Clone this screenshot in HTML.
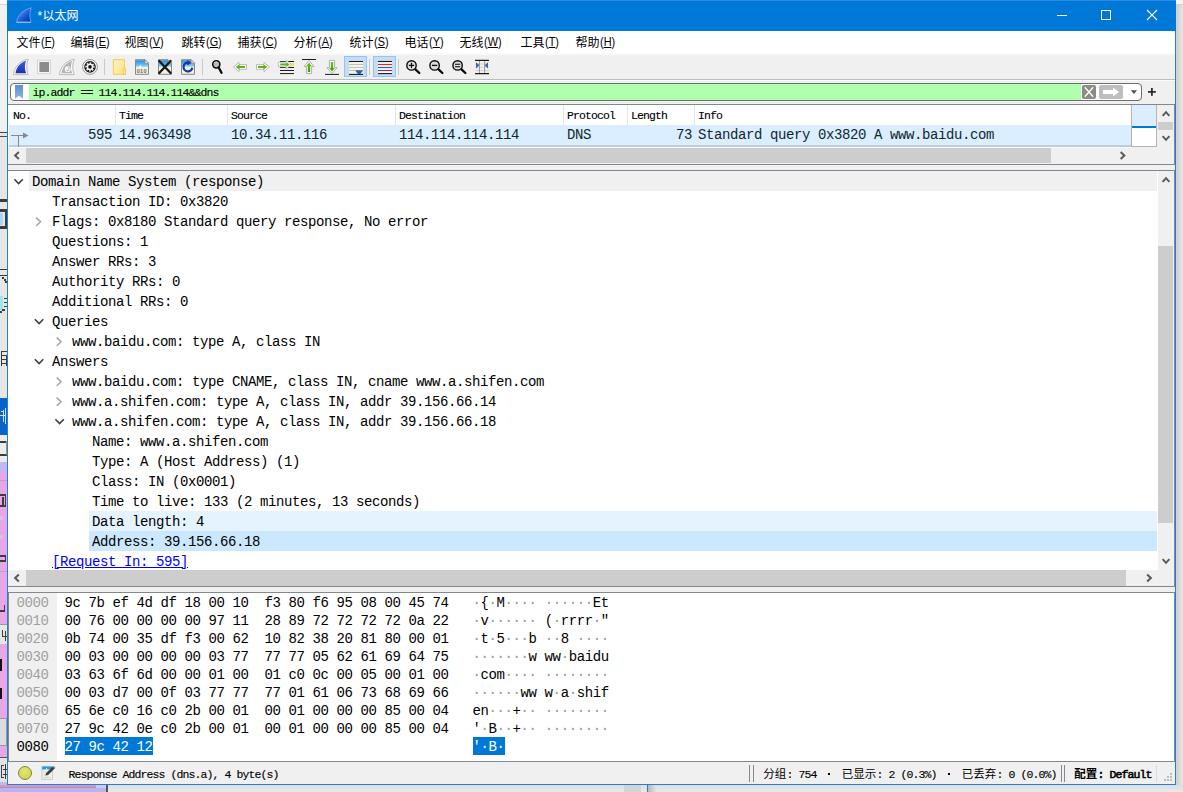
<!DOCTYPE html><html><head><meta charset="utf-8"><title>Wireshark</title><style>
*{margin:0;padding:0;box-sizing:border-box}
html,body{width:1183px;height:792px;overflow:hidden}
body{position:relative;background:#e9e9e9;font-family:"Liberation Sans",sans-serif;font-size:12px;color:#000}
.a{position:absolute}
.win{left:7px;top:0;width:1169px;height:785px;background:#f0f0f0;border:1px solid #1a82d8;border-top:none}
.mono{font-family:"Liberation Mono",monospace;font-size:14px;letter-spacing:-0.4px;white-space:pre;line-height:20px;height:20px}
.sim{font-family:"Liberation Mono",monospace;font-size:11.5px;letter-spacing:-0.9px;white-space:pre;-webkit-text-stroke:0.12px currentColor}
.ui{font-family:"Liberation Sans",sans-serif;font-size:12px;white-space:pre}
.ln{background:#828790}
svg{position:absolute;overflow:visible}
.cjk{font-family:"Liberation Sans","Noto Sans CJK SC",sans-serif}
</style></head><body><div class="a" style="left:0px;top:0px;width:7px;height:4px;background:#fafafa;"></div><div class="a" style="left:0px;top:4px;width:7px;height:1px;background:#d9d9d9;"></div><div class="a" style="left:0px;top:5px;width:7px;height:126px;background:#f1f1f1;"></div><div class="a" style="left:0px;top:131px;width:7px;height:267px;background:#e6e6e6;"></div><div class="a" style="left:0px;top:132px;width:7px;height:1px;background:#4a4a4a;"></div><div class="a" style="left:0px;top:136px;width:7px;height:1px;background:#4a4a4a;"></div><div class="a" style="left:0px;top:199px;width:7px;height:3px;background:#3c3c3c;"></div><div class="a" style="left:0px;top:209px;width:7px;height:3px;background:#3c3c3c;"></div><div class="a" style="left:5px;top:212px;width:2px;height:15px;background:#3c3c3c;"></div><div class="a" style="left:0px;top:213px;width:3px;height:12px;background:#a6d6f6;"></div><div class="a" style="left:0px;top:226px;width:7px;height:3px;background:#3c3c3c;"></div><div class="a" style="left:0px;top:269px;width:7px;height:1px;background:#3c3c3c;"></div><div class="a" style="left:0px;top:275px;width:7px;height:1px;background:#3c3c3c;"></div><div class="a" style="left:2px;top:277px;width:2px;height:2px;background:#3c3c3c;"></div><div class="a" style="left:4px;top:279px;width:2px;height:2px;background:#3c3c3c;"></div><div class="a" style="left:5px;top:281px;width:2px;height:2px;background:#3c3c3c;"></div><div class="a" style="left:0px;top:296px;width:3px;height:14px;background:#9fe3ee;"></div><div class="a" style="left:4px;top:298px;width:3px;height:1px;background:#3c3c3c;"></div><div class="a" style="left:4px;top:302px;width:3px;height:1px;background:#3c3c3c;"></div><div class="a" style="left:4px;top:306px;width:3px;height:1px;background:#3c3c3c;"></div><div class="a" style="left:2px;top:309px;width:3px;height:2px;background:#3c3c3c;"></div><div class="a" style="left:0px;top:311px;width:2px;height:2px;background:#3c3c3c;"></div><div class="a" style="left:1px;top:351px;width:6px;height:1px;background:#3c3c3c;"></div><div class="a" style="left:1px;top:355px;width:6px;height:1px;background:#3c3c3c;"></div><div class="a" style="left:1px;top:359px;width:6px;height:1px;background:#3c3c3c;"></div><div class="a" style="left:1px;top:363px;width:6px;height:1px;background:#3c3c3c;"></div><div class="a" style="left:1px;top:351px;width:1px;height:15px;background:#3c3c3c;"></div><div class="a" style="left:6px;top:355px;width:1px;height:11px;background:#3c3c3c;"></div><div class="a" style="left:0px;top:398px;width:7px;height:37px;background:#0a63c9;"></div><div class="a" style="left:1px;top:411px;width:2px;height:1px;background:#cfe3f8;"></div><div class="a" style="left:0px;top:415px;width:5px;height:1px;background:#cfe3f8;"></div><div class="a" style="left:3px;top:410px;width:1px;height:12px;background:#cfe3f8;"></div><div class="a" style="left:5px;top:408px;width:1px;height:16px;background:#cfe3f8;"></div><div class="a" style="left:0px;top:435px;width:7px;height:27px;background:#ececec;"></div><div class="a" style="left:0px;top:441px;width:6px;height:2px;background:#3c3c3c;"></div><div class="a" style="left:0px;top:454px;width:7px;height:2px;background:#3c3c3c;"></div><div class="a" style="left:6px;top:441px;width:1px;height:14px;background:#c98a3a;"></div><div class="a" style="left:0px;top:462px;width:7px;height:10px;background:#c4b6ee;"></div><div class="a" style="left:0px;top:472px;width:7px;height:320px;background:#e7a6e7;"></div><div class="a" style="left:0px;top:480px;width:7px;height:1px;background:#c5a0c5;"></div><div class="a" style="left:0px;top:571px;width:7px;height:1px;background:#c5a0c5;"></div><div class="a" style="left:0px;top:494px;width:6px;height:2px;background:#3c3c3c;"></div><div class="a" style="left:2px;top:497px;width:2px;height:9px;background:#3c3c3c;"></div><div class="a" style="left:0px;top:505px;width:6px;height:2px;background:#3c3c3c;"></div><div class="a" style="left:5px;top:494px;width:1px;height:12px;background:#3c3c3c;"></div><div class="a" style="left:0px;top:516px;width:3px;height:4px;background:#d9c3d9;"></div><div class="a" style="left:0px;top:535px;width:3px;height:4px;background:#d9c3d9;"></div><div class="a" style="left:0px;top:555px;width:6px;height:2px;background:#3c3c3c;"></div><div class="a" style="left:0px;top:560px;width:6px;height:2px;background:#3c3c3c;"></div><div class="a" style="left:5px;top:556px;width:1px;height:5px;background:#3c3c3c;"></div><div class="a" style="left:0px;top:610px;width:5px;height:2px;background:#3c3c3c;"></div><div class="a" style="left:4px;top:605px;width:1px;height:7px;background:#3c3c3c;"></div><div class="a" style="left:0px;top:624px;width:7px;height:20px;background:#e6e6e6;"></div><div class="a" style="left:0px;top:624px;width:7px;height:1px;background:#9a9a9a;"></div><div class="a" style="left:2px;top:630px;width:1px;height:7px;background:#3c3c3c;"></div><div class="a" style="left:2px;top:636px;width:5px;height:1px;background:#3c3c3c;"></div><div class="a" style="left:5px;top:631px;width:1px;height:10px;background:#3c3c3c;"></div><div class="a" style="left:0px;top:659px;width:2px;height:12px;background:#111;"></div><div class="a" style="left:0px;top:688px;width:2px;height:11px;background:#111;"></div><div class="a" style="left:0px;top:718px;width:7px;height:28px;background:#dcdcdc;"></div><div class="a" style="left:0px;top:718px;width:7px;height:1px;background:#9a9a9a;"></div><div class="a" style="left:0px;top:745px;width:7px;height:1px;background:#9a9a9a;"></div><div class="a" style="left:6px;top:718px;width:1px;height:28px;background:#9a9a9a;"></div><div class="a" style="left:0px;top:757px;width:7px;height:1px;background:#555;"></div><div class="a" style="left:0px;top:758px;width:7px;height:24px;background:#e2e2e2;"></div><div class="a" style="left:1px;top:765px;width:1px;height:13px;background:#3c3c3c;"></div><div class="a" style="left:1px;top:765px;width:3px;height:1px;background:#3c3c3c;"></div><div class="a" style="left:1px;top:777px;width:3px;height:1px;background:#3c3c3c;"></div><div class="a" style="left:5px;top:764px;width:1px;height:15px;background:#3c3c3c;"></div><div class="a" style="left:3px;top:769px;width:4px;height:1px;background:#3c3c3c;"></div><div class="a" style="left:3px;top:774px;width:4px;height:1px;background:#3c3c3c;"></div><div class="a" style="left:0px;top:782px;width:7px;height:10px;background:#c4b6ee;"></div><div class="a" style="left:1176px;top:0px;width:7px;height:4px;background:#f6f6f6;"></div><div class="a" style="left:1176px;top:4px;width:7px;height:1px;background:#cfcfcf;"></div><div class="a" style="left:1176px;top:5px;width:7px;height:780px;background:linear-gradient(90deg,#cfcfcf,#e6e6e6)"></div><div class="a" style="left:0;top:785px;width:1183px;height:7px;background:linear-gradient(180deg,#dedede,#e9e9e9)"></div><div class="a" style="left:0px;top:785px;width:96px;height:2px;background:#dd90cc;"></div><div class="a" style="left:0px;top:787px;width:96px;height:1px;background:#9c9c9c;"></div><div class="a" style="left:0px;top:788px;width:106px;height:4px;background:#bdb2ef;"></div><div class="a" style="left:96px;top:785px;width:10px;height:3px;background:#cfc8f0;"></div><div class="a" style="left:106px;top:785px;width:2px;height:7px;background:#555;"></div><div class="a" style="left:624px;top:785px;width:17px;height:7px;background:#d4d4d4;"></div><div class="a" style="left:647px;top:785px;width:1px;height:7px;background:#1a82d8;"></div><div class="a" style="left:648px;top:785px;width:9px;height:7px;background:linear-gradient(90deg,#b8b8b8,#e8e8e8)"></div><div class="a win"></div><div class="a" style="left:7px;top:0px;width:1169px;height:31px;background:#0078d7;"></div><div class="a" style="left:7px;top:0px;width:1169px;height:1px;background:#2a8be0;"></div><svg style="left:16px;top:7px" width="16" height="16" viewBox="0 0 16 16"><defs><linearGradient id="fg" x1="0" y1="0" x2="1" y2="1"><stop offset="0.25" stop-color="#4a8ef4"/><stop offset="0.6" stop-color="#1656d2"/><stop offset="0.95" stop-color="#0a2ea2"/></linearGradient></defs><path d="M0.6 15.2C1.2 9.5 6 2.8 15.4 0.8C13.3 5 13.5 10.5 15 15.2Z" fill="url(#fg)" stroke="#6aa2f2" stroke-width="0.9"/><path d="M0.5 15.3H14.8" stroke="#9cc0f4" stroke-width="1.1"/></svg><div class="a ui" style="left:37.5px;top:9px;color:#fff;font-size:12px;line-height:14px">*</div><svg class="a" style="left:0;top:0" width="1" height="1"><text class="cjk" x="42.5" y="19.9" font-size="12" fill="#fff">以太网</text></svg><svg style="left:1050px;top:0" width="125" height="31"><path d="M7 15.5H17" stroke="#fff" stroke-width="1"/><rect x="51.5" y="10.5" width="9" height="9" fill="none" stroke="#fff" stroke-width="1"/><path d="M97 10L107 20M107 10L97 20" stroke="#fff" stroke-width="1.1"/></svg><div class="a" style="left:8px;top:31px;width:1167px;height:22px;background:#fff;"></div><div class="a" style="left:8px;top:53px;width:1167px;height:2px;background:#f9f9f9;"></div><svg class="a" style="left:0;top:0" width="1" height="1"><text class="cjk" x="16.5" y="47.3" font-size="12" fill="#000">文件</text></svg><div class="a ui" style="left:40.5px;top:34px;line-height:16px;font-size:12.5px;transform:scaleX(0.87);transform-origin:0 0">(<span style="text-decoration:underline">F</span>)</div><svg class="a" style="left:0;top:0" width="1" height="1"><text class="cjk" x="70.5" y="47.3" font-size="12" fill="#000">编辑</text></svg><div class="a ui" style="left:94.5px;top:34px;line-height:16px;font-size:12.5px;transform:scaleX(0.87);transform-origin:0 0">(<span style="text-decoration:underline">E</span>)</div><svg class="a" style="left:0;top:0" width="1" height="1"><text class="cjk" x="124.5" y="47.3" font-size="12" fill="#000">视图</text></svg><div class="a ui" style="left:148.5px;top:34px;line-height:16px;font-size:12.5px;transform:scaleX(0.87);transform-origin:0 0">(<span style="text-decoration:underline">V</span>)</div><svg class="a" style="left:0;top:0" width="1" height="1"><text class="cjk" x="181.5" y="47.3" font-size="12" fill="#000">跳转</text></svg><div class="a ui" style="left:205.5px;top:34px;line-height:16px;font-size:12.5px;transform:scaleX(0.87);transform-origin:0 0">(<span style="text-decoration:underline">G</span>)</div><svg class="a" style="left:0;top:0" width="1" height="1"><text class="cjk" x="237.5" y="47.3" font-size="12" fill="#000">捕获</text></svg><div class="a ui" style="left:261.5px;top:34px;line-height:16px;font-size:12.5px;transform:scaleX(0.87);transform-origin:0 0">(<span style="text-decoration:underline">C</span>)</div><svg class="a" style="left:0;top:0" width="1" height="1"><text class="cjk" x="293.5" y="47.3" font-size="12" fill="#000">分析</text></svg><div class="a ui" style="left:317.5px;top:34px;line-height:16px;font-size:12.5px;transform:scaleX(0.87);transform-origin:0 0">(<span style="text-decoration:underline">A</span>)</div><svg class="a" style="left:0;top:0" width="1" height="1"><text class="cjk" x="349.5" y="47.3" font-size="12" fill="#000">统计</text></svg><div class="a ui" style="left:373.5px;top:34px;line-height:16px;font-size:12.5px;transform:scaleX(0.87);transform-origin:0 0">(<span style="text-decoration:underline">S</span>)</div><svg class="a" style="left:0;top:0" width="1" height="1"><text class="cjk" x="404.5" y="47.3" font-size="12" fill="#000">电话</text></svg><div class="a ui" style="left:428.5px;top:34px;line-height:16px;font-size:12.5px;transform:scaleX(0.87);transform-origin:0 0">(<span style="text-decoration:underline">Y</span>)</div><svg class="a" style="left:0;top:0" width="1" height="1"><text class="cjk" x="459.5" y="47.3" font-size="12" fill="#000">无线</text></svg><div class="a ui" style="left:483.5px;top:34px;line-height:16px;font-size:12.5px;transform:scaleX(0.87);transform-origin:0 0">(<span style="text-decoration:underline">W</span>)</div><svg class="a" style="left:0;top:0" width="1" height="1"><text class="cjk" x="520.5" y="47.3" font-size="12" fill="#000">工具</text></svg><div class="a ui" style="left:544.5px;top:34px;line-height:16px;font-size:12.5px;transform:scaleX(0.87);transform-origin:0 0">(<span style="text-decoration:underline">T</span>)</div><svg class="a" style="left:0;top:0" width="1" height="1"><text class="cjk" x="575.5" y="47.3" font-size="12" fill="#000">帮助</text></svg><div class="a ui" style="left:599.5px;top:34px;line-height:16px;font-size:12.5px;transform:scaleX(0.87);transform-origin:0 0">(<span style="text-decoration:underline">H</span>)</div><div class="a" style="left:8px;top:55px;width:1167px;height:24px;background:#f0f0f0;"></div><div class="a" style="left:8px;top:79px;width:1167px;height:1px;background:#bdbdbd;"></div><div class="a" style="left:8px;top:80px;width:1167px;height:1px;background:#fbfbfb;"></div><svg style="left:0;top:0" width="500" height="82" viewBox="0 0 500 82"><defs><linearGradient id="tb1" x1="0" y1="0" x2="0" y2="1"><stop offset="0" stop-color="#3f5edc"/><stop offset="1" stop-color="#1a2fb0"/></linearGradient><linearGradient id="tb2" x1="0" y1="0" x2="1" y2="1"><stop offset="0" stop-color="#fff3bf"/><stop offset="1" stop-color="#ffe184"/></linearGradient><linearGradient id="tb3" x1="0" y1="0" x2="0" y2="1"><stop offset="0" stop-color="#1a8fe3"/><stop offset="0.75" stop-color="#7fc4ef"/><stop offset="1" stop-color="#e8f2f6"/></linearGradient><linearGradient id="tb4" x1="0" y1="0" x2="0" y2="1"><stop offset="0" stop-color="#6cc21a"/><stop offset="1" stop-color="#3f9a0a"/></linearGradient></defs><path d="M13.4 74.6C14.2 67.5 19.5 60.6 28.2 59.2C26.2 64 26.4 70 28.2 74.6Z" fill="#fafafa" stroke="#b4b4b4" stroke-width="0.9"/><path d="M15.5 73.3C16.2 67.6 20 62.6 26.1 60.8C24.5 64.5 24.4 69.5 26.2 73.3Z" fill="url(#tb1)"/><rect x="37.4" y="60.3" width="13" height="13.4" fill="#f6f6f6" stroke="#d2d2d2" stroke-width="0.9"/><rect x="39.4" y="62" width="9.6" height="10" fill="#8c8c8c"/><path d="M59.4 74.6C60.2 67.5 65.5 60.6 74.2 59.2C72.2 64 72.4 70 74.2 74.6Z" fill="#fafafa" stroke="#b4b4b4" stroke-width="0.9"/><path d="M61.5 73.3C62.2 67.6 66 62.6 72.1 60.8C70.5 64.5 70.4 69.5 72.2 73.3Z" fill="#b4b4b4"/><circle cx="67.7" cy="69.2" r="2.9" fill="#fbfbfb"/><path d="M68.9 67.2V69.4A1.3 1.3 0 0 1 66.3 69.6" fill="none" stroke="#b0b0b0" stroke-width="1"/><circle cx="90" cy="66.9" r="7.4" fill="#fdfdfd" stroke="#7c7c7c" stroke-width="0.8"/><circle cx="90" cy="66.9" r="5.8" fill="#1c1c1c"/><circle cx="90" cy="66.9" r="3.3" fill="#f4f4f4"/><circle cx="90" cy="66.9" r="3.9" fill="none" stroke="#f4f4f4" stroke-width="1.5" stroke-dasharray="1.6 1.463" transform="rotate(-12 90 66.9)"/><circle cx="90" cy="66.9" r="1.8" fill="#111"/><rect x="104" y="59" width="1" height="16" fill="#c9c9c9"/><rect x="202" y="59" width="1" height="16" fill="#c9c9c9"/><rect x="369" y="59" width="1" height="16" fill="#c9c9c9"/><rect x="398" y="59" width="1" height="16" fill="#c9c9c9"/><path d="M113.4 59.7H124.4V68.2H125.4V74.3H113.4Z" fill="url(#tb2)" stroke="#f2c744" stroke-width="0.9"/><path d="M123.3 74.3V69.4Q123.3 68.3 124.4 68.3Q125.5 68.3 125.5 69.4V74.3Z" fill="#ffe79a" stroke="#f2c744" stroke-width="0.9"/><path d="M135.5 59.7H145L148.5 63.2V74.3H135.5Z" fill="#f1f1e4" stroke="#7d7d7d" stroke-width="0.9"/><path d="M136 60.2H145L148 63.2V67.5H136Z" fill="url(#tb3)"/><path d="M145 59.7V63.2H148.5Z" fill="#fbfbfb" stroke="#7d7d7d" stroke-width="0.7"/><path d="M139 67.5L140.2 64.6L141 66.2L141.6 67.5Z" fill="#fff"/><text x="136.8" y="72.6" font-family="Liberation Sans, sans-serif" font-size="5.6" font-weight="bold" fill="#707070" letter-spacing="0.2">010</text><path d="M158.5 59.7H168L171.5 63.2V74.3H158.5Z" fill="#f1f1e4" stroke="#7d7d7d" stroke-width="0.9"/><path d="M159 60.2H168L171 63.2V67.5H159Z" fill="url(#tb3)"/><path d="M168 59.7V63.2H171.5Z" fill="#fbfbfb" stroke="#7d7d7d" stroke-width="0.7"/><path d="M159.2 61L170.6 73M170.6 61L159.2 73" stroke="#1b1b1b" stroke-width="2.4" stroke-linecap="round"/><path d="M181.5 59.7H191L194.5 63.2V74.3H181.5Z" fill="#f1f1e4" stroke="#7d7d7d" stroke-width="0.9"/><path d="M182 60.2H191L194 63.2V67.5H182Z" fill="url(#tb3)"/><path d="M191 59.7V63.2H194.5Z" fill="#fbfbfb" stroke="#7d7d7d" stroke-width="0.7"/><path d="M192.3 67.7A4.4 4.4 0 1 1 188.2 62.6" fill="none" stroke="#17389c" stroke-width="2.2"/><path d="M187.4 60L191.6 62.7L187.4 65.6Z" fill="#17389c"/><circle cx="216.3" cy="64.3" r="3.6" fill="#b9b9b9" stroke="#0a0a0a" stroke-width="1.5"/><path d="M214.2 63.2A2.4 2.4 0 0 1 217 62" stroke="#e6e6e6" stroke-width="0.9" fill="none"/><path d="M218.7 67.5L221.5 72.8" stroke="#0a0a0a" stroke-width="2.3" stroke-linecap="round"/><path d="M233.5 67L239 62.3V64.6H246.5V69.4H239V71.7Z" fill="#fdfdfd" stroke="#b4b4b4" stroke-width="0.9"/><path d="M235.7 67L239.6 64.2V66H245 V68H239.6V69.8Z" fill="#5db512"/><path d="M269.5 67L264 62.3V64.6H256.5V69.4H264V71.7Z" fill="#fdfdfd" stroke="#b4b4b4" stroke-width="0.9"/><path d="M267.3 67L263.4 64.2V66H258V68H263.4V69.8Z" fill="#5db512"/><path d="M280 61.5H294" stroke="#1b1b1b" stroke-width="1"/><path d="M280 67.5H294" stroke="#1b1b1b" stroke-width="1"/><path d="M280 70.5H294" stroke="#1b1b1b" stroke-width="1"/><path d="M280 73.6H294" stroke="#1b1b1b" stroke-width="1"/><rect x="290" y="63" width="4" height="3" fill="#ffe23a"/><path d="M291.5 64.5L286 60V62.2H278.3V66.8H286V69Z" fill="#fdfdfd" stroke="#b4b4b4" stroke-width="0.8"/><path d="M289.6 64.5L286.2 61.9V63.6H280.2V65.4H286.2V67.1Z" fill="#5db512"/><path d="M302 59.5H316" stroke="#1b1b1b" stroke-width="1"/><path d="M309 60.5L314 66.5H311.6V73.6H306.4V66.5H304Z" fill="#fdfdfd" stroke="#a8a8a8" stroke-width="0.9"/><path d="M309 62.6L311.8 66.2H310.2V72H307.8V66.2H306.2Z" fill="url(#tb4)"/><path d="M325 74.4H339" stroke="#1b1b1b" stroke-width="1"/><path d="M332 73.6L337 67.6H334.6V60.4H329.4V67.6H327Z" fill="#fdfdfd" stroke="#a8a8a8" stroke-width="0.9"/><path d="M332 71.5L334.8 67.9H333.2V62H330.8V67.9H329.2Z" fill="url(#tb4)"/><rect x="344.5" y="56.5" width="22" height="20" fill="#c5dcf3" stroke="#8fc6f5" stroke-width="1"/><rect x="349" y="62" width="14" height="12" fill="#f3f3ec"/><path d="M349 61.5H363" stroke="#1b1b1b" stroke-width="1"/><path d="M349 64.5H363" stroke="#c2c2b6" stroke-width="1"/><path d="M349 67.5H363" stroke="#c2c2b6" stroke-width="1"/><path d="M349 70.5H363" stroke="#c2c2b6" stroke-width="1"/><path d="M349 74.4H363" stroke="#1b1b1b" stroke-width="1.1"/><path d="M355.2 70.3H363L360.4 74H357.8Z" fill="#2f5fa8"/><rect x="373.5" y="56.5" width="22" height="20" fill="#c5dcf3" stroke="#8fc6f5" stroke-width="1"/><rect x="378" y="62" width="14" height="11.5" fill="#f6f6f6"/><path d="M378 61.5H392" stroke="#1b1b1b" stroke-width="1.1"/><path d="M378 64.5H392" stroke="#ee2222" stroke-width="1.1"/><path d="M378 67.5H392" stroke="#2a5ca8" stroke-width="1.1"/><path d="M378 70.5H392" stroke="#6e3a78" stroke-width="1.1"/><path d="M378 73.6H392" stroke="#1b1b1b" stroke-width="1.1"/><circle cx="411.5" cy="65.4" r="4.7" fill="#dcdcdc" stroke="#0a0a0a" stroke-width="1.4"/><path d="M415.4 69.30000000000001L419.3 73.0" stroke="#0a0a0a" stroke-width="2.3" stroke-linecap="round"/><path d="M408.9 65.4H414.1M411.5 62.800000000000004V68.0" stroke="#0a0a0a" stroke-width="1.2"/><circle cx="434.6" cy="65.4" r="4.7" fill="#dcdcdc" stroke="#0a0a0a" stroke-width="1.4"/><path d="M438.5 69.30000000000001L442.40000000000003 73.0" stroke="#0a0a0a" stroke-width="2.3" stroke-linecap="round"/><path d="M432.0 65.4H437.20000000000005" stroke="#0a0a0a" stroke-width="1.3"/><circle cx="457.6" cy="65.4" r="4.7" fill="#dcdcdc" stroke="#0a0a0a" stroke-width="1.4"/><path d="M461.5 69.30000000000001L465.40000000000003 73.0" stroke="#0a0a0a" stroke-width="2.3" stroke-linecap="round"/><path d="M455.0 64.30000000000001H460.20000000000005M455.0 66.7H460.20000000000005" stroke="#0a0a0a" stroke-width="1.1"/><path d="M475 64H489" stroke="#d0d0c8" stroke-width="0.9"/><path d="M475 67.3H489" stroke="#d0d0c8" stroke-width="0.9"/><path d="M475 70.6H489" stroke="#d0d0c8" stroke-width="0.9"/><path d="M479.5 60V74M484.6 60V74" stroke="#9a9a9a" stroke-width="1"/><path d="M475 60.4H489M475 73.6H489" stroke="#1b1b1b" stroke-width="1.1"/><path d="M476 62.2L479.4 65.3L476 68.4Z" fill="#2f66b6"/><path d="M488 62.2L484.7 65.3L488 68.4Z" fill="#2f66b6"/></svg><div class="a" style="left:10px;top:83px;width:1132px;height:18px;background:#fff;border:1px solid #6e6e6e;border-radius:4px"></div><div class="a" style="left:29px;top:84px;width:1052px;height:16px;background:#afffaf;"></div><svg style="left:15px;top:85.3px" width="9" height="14"><defs><linearGradient id="bm" x1="0" y1="0" x2="0" y2="1"><stop offset="0" stop-color="#5b8fd0"/><stop offset="1" stop-color="#8db4e4"/></linearGradient></defs><path d="M0 0H8V13.7L4 10.8L0 13.7Z" fill="url(#bm)"/></svg><div class="a sim" style="left:32.5px;top:86px;line-height:14px">ip.addr == 114.114.114.114&amp;&amp;dns</div><svg style="left:1082px;top:85px" width="62" height="14"><rect x="0" y="0" width="14" height="14" rx="2" fill="#8b8b85"/><path d="M2.8 2.3L11.2 11.7M11.2 2.3L2.8 11.7" stroke="#fff" stroke-width="1.3"/><rect x="17" y="0" width="24" height="14" rx="2" fill="#bebebe"/><path d="M21 5H31V2.5L37 7L31 11.5V9H21Z" fill="#fff"/><path d="M48.8 5.2H55L51.9 9Z" fill="#505050"/></svg><svg style="left:1148px;top:88px" width="8" height="8"><path d="M0 3.9H7.8M3.9 0V7.8" stroke="#2a2a2a" stroke-width="1.8"/></svg><div class="a" style="left:8px;top:104px;width:1167px;height:1px;background:#828790;"></div><div class="a" style="left:8px;top:105px;width:1124px;height:20px;background:#fff;"></div><div class="a" style="left:115px;top:105px;width:1px;height:20px;background:#e5e5e5;"></div><div class="a" style="left:227px;top:105px;width:1px;height:20px;background:#e5e5e5;"></div><div class="a" style="left:395px;top:105px;width:1px;height:20px;background:#e5e5e5;"></div><div class="a" style="left:563px;top:105px;width:1px;height:20px;background:#e5e5e5;"></div><div class="a" style="left:627px;top:105px;width:1px;height:20px;background:#e5e5e5;"></div><div class="a" style="left:694px;top:105px;width:1px;height:20px;background:#e5e5e5;"></div><div class="a sim" style="left:13px;top:109px;line-height:14px">No.</div><div class="a sim" style="left:119px;top:109px;line-height:14px">Time</div><div class="a sim" style="left:231px;top:109px;line-height:14px">Source</div><div class="a sim" style="left:399px;top:109px;line-height:14px">Destination</div><div class="a sim" style="left:567px;top:109px;line-height:14px">Protocol</div><div class="a sim" style="left:631px;top:109px;line-height:14px">Length</div><div class="a sim" style="left:698px;top:109px;line-height:14px">Info</div><div class="a" style="left:8px;top:125px;width:1124px;height:20px;background:#daeeff;"></div><div class="a" style="left:8px;top:145px;width:1124px;height:2px;background:#bccddc;"></div><div class="a mono" style="left:88px;top:125px;color:#12272e">595</div><div class="a mono" style="left:119px;top:125px;color:#12272e">14.963498</div><div class="a mono" style="left:231px;top:125px;color:#12272e">10.34.11.116</div><div class="a mono" style="left:399px;top:125px;color:#12272e">114.114.114.114</div><div class="a mono" style="left:567px;top:125px;color:#12272e">DNS</div><div class="a mono" style="left:676px;top:125px;color:#12272e">73</div><div class="a mono" style="left:698px;top:125px;color:#12272e">Standard query 0x3820 A www.baidu.com</div><div class="a" style="left:8px;top:125px;width:1px;height:22px;background:#fdfeff;"></div><svg style="left:10px;top:128px" width="20" height="18"><path d="M1 7.5H14" stroke="#888" stroke-width="1"/><path d="M13 4.5L18.5 7.5L13 10.5Z" fill="#888"/><path d="M8.5 7.5V19" stroke="#888" stroke-width="1"/></svg><div class="a" style="left:1132px;top:105px;width:25px;height:41px;background:#fff;"></div><div class="a" style="left:1132px;top:105px;width:25px;height:21px;background:#daeeff;"></div><div class="a" style="left:1132px;top:126px;width:25px;height:2px;background:#0078d7;"></div><div class="a" style="left:1131px;top:105px;width:1px;height:42px;background:#b4b4b4;"></div><div class="a" style="left:1156px;top:105px;width:1px;height:42px;background:#b4b4b4;"></div><div class="a" style="left:1131px;top:146px;width:26px;height:1px;background:#b4b4b4;"></div><div class="a" style="left:1157px;top:105px;width:18px;height:41px;background:#f0f0f0;"></div><div class="a" style="left:1158px;top:122px;width:15px;height:8px;background:#cdcdcd;"></div><svg style="left:0;top:0" width="1" height="1"><path d="M1162.6 115.85L1166 112.15L1169.4 115.85" fill="none" stroke="#5a5a5a" stroke-width="2.0"/></svg><svg style="left:0;top:0" width="1" height="1"><path d="M1162.6 136.15L1166 139.85L1169.4 136.15" fill="none" stroke="#5a5a5a" stroke-width="2.0"/></svg><div class="a" style="left:1132px;top:147px;width:43px;height:17px;background:#f0f0f0;"></div><div class="a" style="left:8px;top:147px;width:1124px;height:17px;background:#f0f0f0;"></div><div class="a" style="left:8px;top:147px;width:1124px;height:1px;background:#fbfbfb;"></div><div class="a" style="left:26px;top:148px;width:1025px;height:15px;background:#cdcdcd;"></div><svg style="left:0;top:0" width="1" height="1"><path d="M18.85 152.1L15.15 155.5L18.85 158.9" fill="none" stroke="#5a5a5a" stroke-width="2.0"/></svg><svg style="left:0;top:0" width="1" height="1"><path d="M1120.65 152.1L1124.35 155.5L1120.65 158.9" fill="none" stroke="#5a5a5a" stroke-width="2.0"/></svg><div class="a" style="left:8px;top:164px;width:1167px;height:1px;background:#828790;"></div><div class="a" style="left:8px;top:170px;width:1167px;height:1px;background:#828790;"></div><div class="a" style="left:8px;top:171px;width:1150px;height:399px;background:#fff;"></div><div class="a" style="left:29px;top:171px;width:1128px;height:20px;background:#f0f0f0;"></div><div class="a" style="left:89px;top:511px;width:1068px;height:20px;background:#e5f3ff;"></div><div class="a" style="left:89px;top:531px;width:1068px;height:20px;background:#cce8ff;"></div><div class="a" style="left:8px;top:171px;width:1150px;height:399px;overflow:hidden"><div class="a mono" style="left:24px;top:1px">Domain Name System (response)</div><div class="a mono" style="left:44px;top:21px">Transaction ID: 0x3820</div><div class="a mono" style="left:44px;top:41px">Flags: 0x8180 Standard query response, No error</div><div class="a mono" style="left:44px;top:61px">Questions: 1</div><div class="a mono" style="left:44px;top:81px">Answer RRs: 3</div><div class="a mono" style="left:44px;top:101px">Authority RRs: 0</div><div class="a mono" style="left:44px;top:121px">Additional RRs: 0</div><div class="a mono" style="left:44px;top:141px">Queries</div><div class="a mono" style="left:64px;top:161px">www.baidu.com: type A, class IN</div><div class="a mono" style="left:44px;top:181px">Answers</div><div class="a mono" style="left:64px;top:201px">www.baidu.com: type CNAME, class IN, cname www.a.shifen.com</div><div class="a mono" style="left:64px;top:221px">www.a.shifen.com: type A, class IN, addr 39.156.66.14</div><div class="a mono" style="left:64px;top:241px">www.a.shifen.com: type A, class IN, addr 39.156.66.18</div><div class="a mono" style="left:84px;top:261px">Name: www.a.shifen.com</div><div class="a mono" style="left:84px;top:281px">Type: A (Host Address) (1)</div><div class="a mono" style="left:84px;top:301px">Class: IN (0x0001)</div><div class="a mono" style="left:84px;top:321px">Time to live: 133 (2 minutes, 13 seconds)</div><div class="a mono" style="left:84px;top:341px">Data length: 4</div><div class="a mono" style="left:84px;top:361px">Address: 39.156.66.18</div><div class="a mono" style="left:44px;top:381px;color:#0000ff;text-decoration:underline">[Request In: 595]</div></div><svg style="left:0;top:0" width="1" height="1"><path d="M14.400000000000002 179.20000000000002L18.6 183.6L22.8 179.20000000000002" fill="none" stroke="#404040" stroke-width="1.65"/></svg><svg style="left:0;top:0" width="1" height="1"><path d="M36.199999999999996 217.6L40.6 221.7L36.199999999999996 225.79999999999998" fill="none" stroke="#a4a4a4" stroke-width="1.5"/></svg><svg style="left:0;top:0" width="1" height="1"><path d="M34.9 319.2L39.1 323.59999999999997L43.300000000000004 319.2" fill="none" stroke="#404040" stroke-width="1.65"/></svg><svg style="left:0;top:0" width="1" height="1"><path d="M56.699999999999996 337.59999999999997L61.1 341.7L56.699999999999996 345.8" fill="none" stroke="#a4a4a4" stroke-width="1.5"/></svg><svg style="left:0;top:0" width="1" height="1"><path d="M34.9 359.2L39.1 363.59999999999997L43.300000000000004 359.2" fill="none" stroke="#404040" stroke-width="1.65"/></svg><svg style="left:0;top:0" width="1" height="1"><path d="M56.699999999999996 377.59999999999997L61.1 381.7L56.699999999999996 385.8" fill="none" stroke="#a4a4a4" stroke-width="1.5"/></svg><svg style="left:0;top:0" width="1" height="1"><path d="M56.699999999999996 397.59999999999997L61.1 401.7L56.699999999999996 405.8" fill="none" stroke="#a4a4a4" stroke-width="1.5"/></svg><svg style="left:0;top:0" width="1" height="1"><path d="M55.4 419.2L59.6 423.59999999999997L63.800000000000004 419.2" fill="none" stroke="#404040" stroke-width="1.65"/></svg><div class="a" style="left:1158px;top:171px;width:17px;height:399px;background:#f0f0f0;"></div><div class="a" style="left:1158px;top:246px;width:15px;height:277px;background:#cdcdcd;"></div><svg style="left:0;top:0" width="1" height="1"><path d="M1162.6 181.85L1166 178.15L1169.4 181.85" fill="none" stroke="#5a5a5a" stroke-width="2.0"/></svg><svg style="left:0;top:0" width="1" height="1"><path d="M1162.6 559.15L1166 562.85L1169.4 559.15" fill="none" stroke="#5a5a5a" stroke-width="2.0"/></svg><div class="a" style="left:8px;top:570px;width:1167px;height:16px;background:#f0f0f0;"></div><div class="a" style="left:26px;top:570px;width:1100px;height:16px;background:#cdcdcd;"></div><svg style="left:0;top:0" width="1" height="1"><path d="M18.85 574.6L15.15 578L18.85 581.4" fill="none" stroke="#5a5a5a" stroke-width="2.0"/></svg><svg style="left:0;top:0" width="1" height="1"><path d="M1147.15 574.6L1150.85 578L1147.15 581.4" fill="none" stroke="#5a5a5a" stroke-width="2.0"/></svg><div class="a" style="left:8px;top:586px;width:1167px;height:1px;background:#828790;"></div><div class="a" style="left:8px;top:592px;width:1167px;height:1px;background:#828790;"></div><div class="a" style="left:8px;top:593px;width:1167px;height:168px;background:#fff;"></div><div class="a" style="left:8px;top:593px;width:49px;height:168px;background:#f0f0f0;"></div><div class="a" style="left:8px;top:761px;width:1167px;height:1px;background:#828790;"></div><div class="a" style="left:65px;top:737px;width:88px;height:18px;background:#0078d7;"></div><div class="a" style="left:473px;top:737px;width:32px;height:18px;background:#0078d7;"></div><div class="a mono" style="left:16.5px;top:594px;color:#a0a0a0;line-height:18px">0000</div><div class="a mono" style="left:64.5px;top:594px;color:#000;line-height:18px">9c 7b ef 4d df 18 00 10  f3 80 f6 95 08 00 45 74</div><div class="a mono" style="left:472.5px;top:594px;color:#000;line-height:18px"><span style="color:#9a9a9a">·</span>{<span style="color:#9a9a9a">·</span>M<span style="color:#9a9a9a">·</span><span style="color:#9a9a9a">·</span><span style="color:#9a9a9a">·</span><span style="color:#9a9a9a">·</span> <span style="color:#9a9a9a">·</span><span style="color:#9a9a9a">·</span><span style="color:#9a9a9a">·</span><span style="color:#9a9a9a">·</span><span style="color:#9a9a9a">·</span><span style="color:#9a9a9a">·</span>Et</div><div class="a mono" style="left:16.5px;top:612px;color:#a0a0a0;line-height:18px">0010</div><div class="a mono" style="left:64.5px;top:612px;color:#000;line-height:18px">00 76 00 00 00 00 97 11  28 89 72 72 72 72 0a 22</div><div class="a mono" style="left:472.5px;top:612px;color:#000;line-height:18px"><span style="color:#9a9a9a">·</span>v<span style="color:#9a9a9a">·</span><span style="color:#9a9a9a">·</span><span style="color:#9a9a9a">·</span><span style="color:#9a9a9a">·</span><span style="color:#9a9a9a">·</span><span style="color:#9a9a9a">·</span> (<span style="color:#9a9a9a">·</span>rrrr<span style="color:#9a9a9a">·</span>"</div><div class="a mono" style="left:16.5px;top:630px;color:#a0a0a0;line-height:18px">0020</div><div class="a mono" style="left:64.5px;top:630px;color:#000;line-height:18px">0b 74 00 35 df f3 00 62  10 82 38 20 81 80 00 01</div><div class="a mono" style="left:472.5px;top:630px;color:#000;line-height:18px"><span style="color:#9a9a9a">·</span>t<span style="color:#9a9a9a">·</span>5<span style="color:#9a9a9a">·</span><span style="color:#9a9a9a">·</span><span style="color:#9a9a9a">·</span>b <span style="color:#9a9a9a">·</span><span style="color:#9a9a9a">·</span>8 <span style="color:#9a9a9a">·</span><span style="color:#9a9a9a">·</span><span style="color:#9a9a9a">·</span><span style="color:#9a9a9a">·</span></div><div class="a mono" style="left:16.5px;top:648px;color:#a0a0a0;line-height:18px">0030</div><div class="a mono" style="left:64.5px;top:648px;color:#000;line-height:18px">00 03 00 00 00 00 03 77  77 77 05 62 61 69 64 75</div><div class="a mono" style="left:472.5px;top:648px;color:#000;line-height:18px"><span style="color:#9a9a9a">·</span><span style="color:#9a9a9a">·</span><span style="color:#9a9a9a">·</span><span style="color:#9a9a9a">·</span><span style="color:#9a9a9a">·</span><span style="color:#9a9a9a">·</span><span style="color:#9a9a9a">·</span>w ww<span style="color:#9a9a9a">·</span>baidu</div><div class="a mono" style="left:16.5px;top:666px;color:#a0a0a0;line-height:18px">0040</div><div class="a mono" style="left:64.5px;top:666px;color:#000;line-height:18px">03 63 6f 6d 00 00 01 00  01 c0 0c 00 05 00 01 00</div><div class="a mono" style="left:472.5px;top:666px;color:#000;line-height:18px"><span style="color:#9a9a9a">·</span>com<span style="color:#9a9a9a">·</span><span style="color:#9a9a9a">·</span><span style="color:#9a9a9a">·</span><span style="color:#9a9a9a">·</span> <span style="color:#9a9a9a">·</span><span style="color:#9a9a9a">·</span><span style="color:#9a9a9a">·</span><span style="color:#9a9a9a">·</span><span style="color:#9a9a9a">·</span><span style="color:#9a9a9a">·</span><span style="color:#9a9a9a">·</span><span style="color:#9a9a9a">·</span></div><div class="a mono" style="left:16.5px;top:684px;color:#a0a0a0;line-height:18px">0050</div><div class="a mono" style="left:64.5px;top:684px;color:#000;line-height:18px">00 03 d7 00 0f 03 77 77  77 01 61 06 73 68 69 66</div><div class="a mono" style="left:472.5px;top:684px;color:#000;line-height:18px"><span style="color:#9a9a9a">·</span><span style="color:#9a9a9a">·</span><span style="color:#9a9a9a">·</span><span style="color:#9a9a9a">·</span><span style="color:#9a9a9a">·</span><span style="color:#9a9a9a">·</span>ww w<span style="color:#9a9a9a">·</span>a<span style="color:#9a9a9a">·</span>shif</div><div class="a mono" style="left:16.5px;top:702px;color:#a0a0a0;line-height:18px">0060</div><div class="a mono" style="left:64.5px;top:702px;color:#000;line-height:18px">65 6e c0 16 c0 2b 00 01  00 01 00 00 00 85 00 04</div><div class="a mono" style="left:472.5px;top:702px;color:#000;line-height:18px">en<span style="color:#9a9a9a">·</span><span style="color:#9a9a9a">·</span><span style="color:#9a9a9a">·</span>+<span style="color:#9a9a9a">·</span><span style="color:#9a9a9a">·</span> <span style="color:#9a9a9a">·</span><span style="color:#9a9a9a">·</span><span style="color:#9a9a9a">·</span><span style="color:#9a9a9a">·</span><span style="color:#9a9a9a">·</span><span style="color:#9a9a9a">·</span><span style="color:#9a9a9a">·</span><span style="color:#9a9a9a">·</span></div><div class="a mono" style="left:16.5px;top:720px;color:#a0a0a0;line-height:18px">0070</div><div class="a mono" style="left:64.5px;top:720px;color:#000;line-height:18px">27 9c 42 0e c0 2b 00 01  00 01 00 00 00 85 00 04</div><div class="a mono" style="left:472.5px;top:720px;color:#000;line-height:18px">'<span style="color:#9a9a9a">·</span>B<span style="color:#9a9a9a">·</span><span style="color:#9a9a9a">·</span>+<span style="color:#9a9a9a">·</span><span style="color:#9a9a9a">·</span> <span style="color:#9a9a9a">·</span><span style="color:#9a9a9a">·</span><span style="color:#9a9a9a">·</span><span style="color:#9a9a9a">·</span><span style="color:#9a9a9a">·</span><span style="color:#9a9a9a">·</span><span style="color:#9a9a9a">·</span><span style="color:#9a9a9a">·</span></div><div class="a mono" style="left:16.5px;top:738px;color:#000;line-height:18px">0080</div><div class="a mono" style="left:64.5px;top:738px;color:#fff;line-height:18px">27 9c 42 12</div><div class="a mono" style="left:472.5px;top:738px;color:#fff;line-height:18px">'·B·</div><div class="a" style="left:1174px;top:104px;width:1px;height:61px;background:#828790;"></div><div class="a" style="left:1174px;top:170px;width:1px;height:417px;background:#828790;"></div><div class="a" style="left:1174px;top:592px;width:1px;height:170px;background:#828790;"></div><div class="a" style="left:8px;top:592px;width:1px;height:170px;background:#828790;"></div><div class="a" style="left:8px;top:762px;width:1167px;height:22px;background:#f0f0f0;"></div><svg style="left:17px;top:765px" width="16" height="16"><defs><radialGradient id="yc" cx="0.45" cy="0.35" r="0.7"><stop offset="0" stop-color="#e4e474"/><stop offset="1" stop-color="#d2d250"/></radialGradient></defs><circle cx="8" cy="8" r="7.4" fill="#f8f8f4"/><circle cx="8" cy="8" r="6.5" fill="url(#yc)" stroke="#77772e" stroke-width="0.9"/></svg><svg style="left:41px;top:765px" width="16" height="16"><rect x="0.9" y="1.3" width="10.6" height="13" fill="#f1f1ec" stroke="#c4c4bc" stroke-width="0.8"/><path d="M1.2 1.5H11.2V4.6H6.5L5.6 2.8L4.6 4.6H1.2Z" fill="#2496dc"/><path d="M2.5 7H6M2.5 9.8H5M2.5 12.4H9" stroke="#d0d0cc" stroke-width="0.9"/><path d="M4.4 10.6L5.2 8.1L11.9 1.4L13.9 3.3L7.1 10Z" fill="#3c3c3c"/><path d="M11.9 1.4L12.8 0.7L14.6 2.5L13.9 3.3Z" fill="#9a9a9a"/></svg><div class="a sim" style="left:68.5px;top:768px;line-height:14px">Response Address (dns.a), 4 byte(s)</div><div class="a" style="left:749px;top:765px;width:1px;height:17px;background:#8a8a8a;"></div><div class="a" style="left:753px;top:765px;width:1px;height:17px;background:#8a8a8a;"></div><div class="a" style="left:1061px;top:765px;width:1px;height:17px;background:#8a8a8a;"></div><div class="a" style="left:1064px;top:765px;width:1px;height:17px;background:#8a8a8a;"></div><div class="a" style="left:1156px;top:765px;width:1px;height:17px;background:#dcdcdc;"></div><svg class="a" style="left:0;top:0" width="1" height="1"><text class="cjk" x="763.2" y="777.8" font-size="11.5" fill="#000">分组</text></svg><div class="a sim" style="left:786.5px;top:768px;line-height:14px">: 754</div><div class="a" style="left:828px;top:773px;width:2px;height:2px;background:#000;"></div><svg class="a" style="left:0;top:0" width="1" height="1"><text class="cjk" x="841.8" y="777.8" font-size="11.5" fill="#000">已显示</text></svg><div class="a sim" style="left:876.5px;top:768px;line-height:14px">: 2 (0.3%)</div><div class="a" style="left:948px;top:773px;width:2px;height:2px;background:#000;"></div><svg class="a" style="left:0;top:0" width="1" height="1"><text class="cjk" x="961.8" y="777.8" font-size="11.5" fill="#000">已丢弃</text></svg><div class="a sim" style="left:996.5px;top:768px;line-height:14px">: 0 (0.0%)</div><svg class="a" style="left:0;top:0" width="1" height="1"><text class="cjk" x="1074.3" y="777.8" font-size="11.5" font-weight="bold" fill="#000">配置</text></svg><div class="a sim" style="left:1097.5px;top:768px;line-height:14px;-webkit-text-stroke:0.55px currentColor">: Default</div><svg style="left:1163px;top:772px" width="10" height="10"><g fill="#bcbcbc"><rect x="7" y="1" width="2" height="2"/><rect x="4" y="4" width="2" height="2"/><rect x="7" y="4" width="2" height="2"/><rect x="1" y="7" width="2" height="2"/><rect x="4" y="7" width="2" height="2"/><rect x="7" y="7" width="2" height="2"/></g></svg></body></html>
